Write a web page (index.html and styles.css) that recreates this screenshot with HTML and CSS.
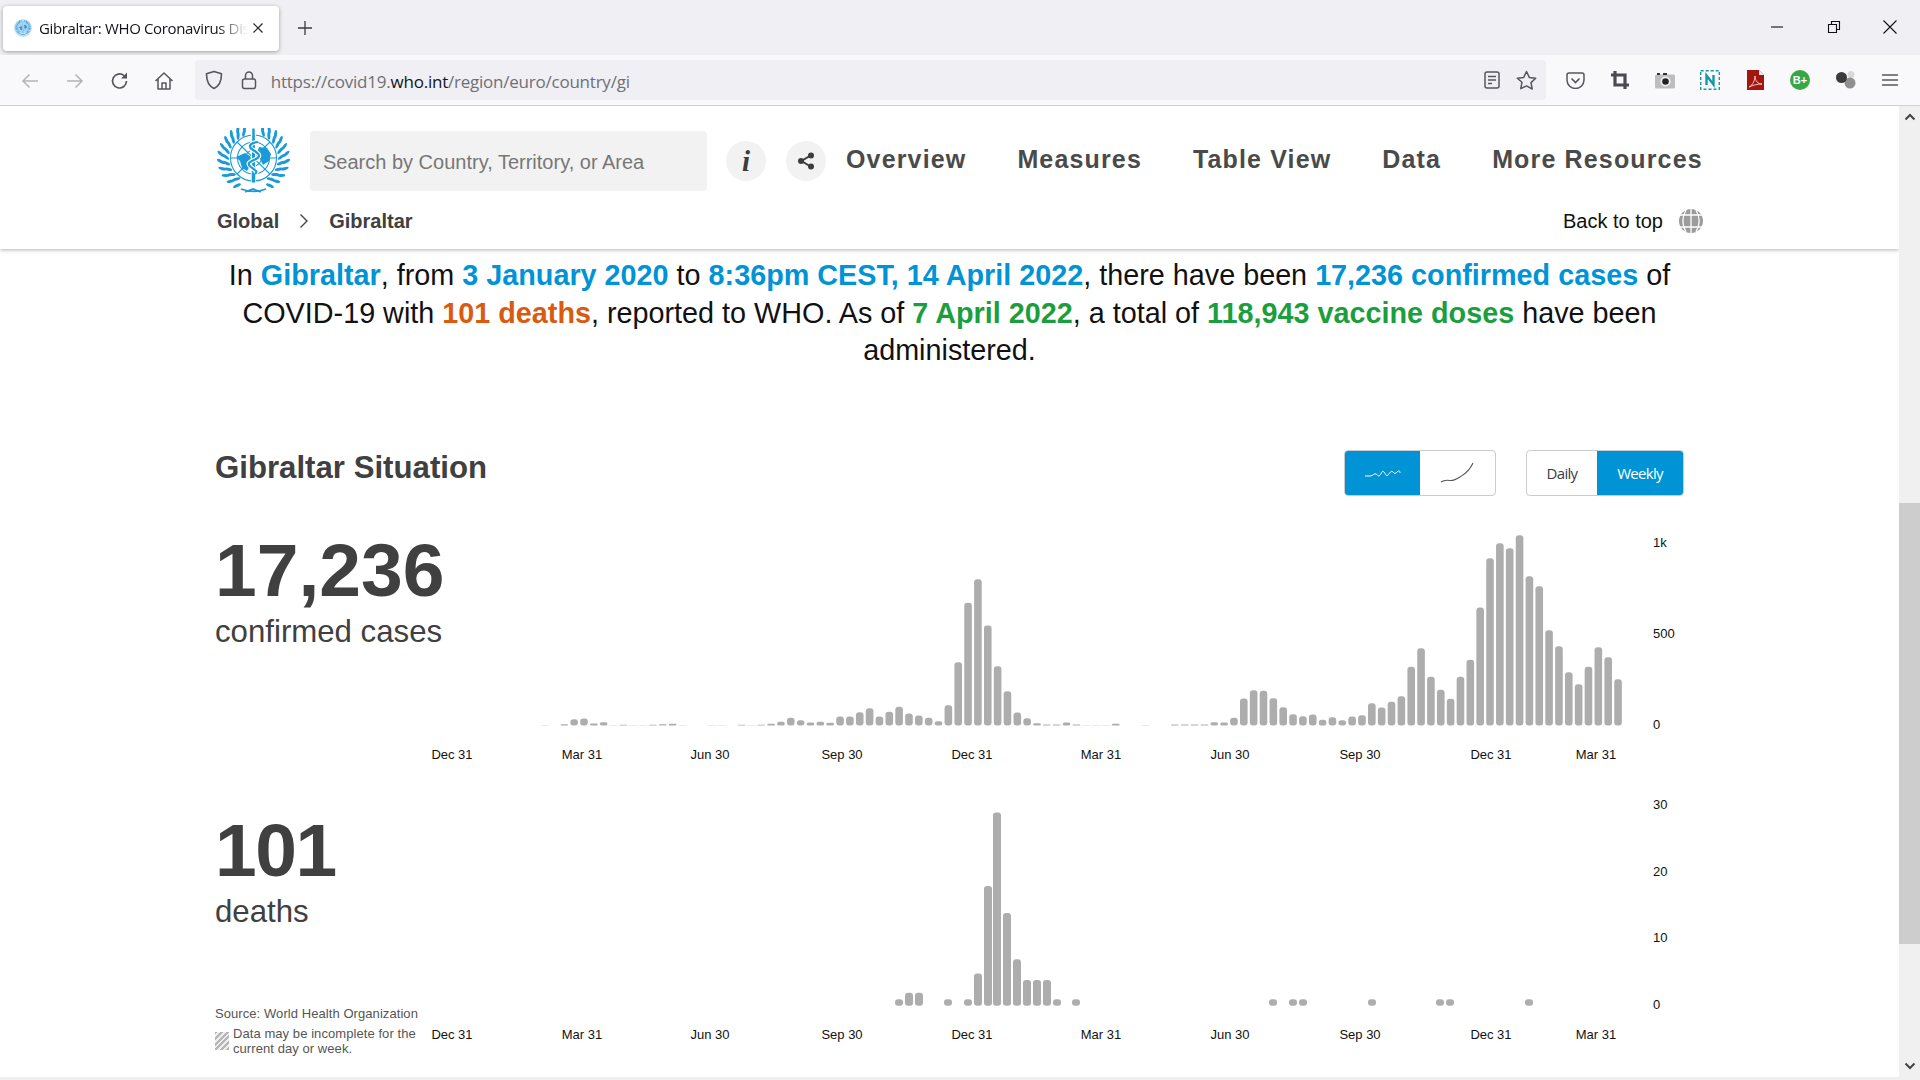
FILE: index.html
```html
<!DOCTYPE html>
<html lang="en">
<head>
    <meta charset="UTF-8">
    <title>Gibraltar: WHO Coronavirus Disease (COVID-19) Dashboard</title>
    <link rel="stylesheet" href="styles.css">
</head>
<body>
    <svg class="defs" width="0" height="0">
        <symbol id="who-logo" viewBox="217 128 73 65">
            <g fill="none" stroke="currentColor" stroke-width="1.1">
                <circle cx="253.5" cy="158" r="23"/>
                <circle cx="253.5" cy="158" r="16"/>
                <circle cx="253.5" cy="158" r="8"/>
                <path d="M230.5 158h46M253.5 135v46M237 142l33 32M270 142l-33 32"/>
            </g>
            <path fill="currentColor" d="M236 157l9-4 5 3 1 8-4 7-5-3-2-7zM259 147l8 1 4 6-2 7-6 4-3-6-3-6z"/>
            <path fill="none" stroke="#fff" stroke-width="5" d="M253.500 132v50"/>
            <path fill="currentColor" d="M252.300 128.500h2.400l.6 54h-3.600z"/>
            <path fill="none" stroke="#fff" stroke-width="4.500" d="M258 142c-9 1-10 5-5 8s9 6 3 9-10 4-5 8 7 4 4 7"/>
            <path fill="none" stroke="currentColor" stroke-width="2.200" d="M258 142c-9 1-10 5-5 8s9 6 3 9-10 4-5 8 7 4 4 7"/>
            <g id="wreath" fill="currentColor"></g>
            <path fill="none" stroke="currentColor" stroke-width="1.800" d="M241 189c8 3 17 3 25 0M245 192l8-3 8 3"/>
        </symbol>
    </svg>

    <div class="browser">
        <div class="tabbar">
            <div class="tab">
                <svg class="favicon" width="18" height="18"><circle cx="9" cy="9" r="9" fill="#bfe2f5"/><use href="#who-logo" x="1" y="1" width="16" height="16"/></svg>
                <span class="tab-title">Gibraltar: WHO Coronavirus Disease (COVID-19)</span>
                <svg class="icon" width="12" height="12" viewBox="0 0 12 12"><path d="M1.500 1.500l9 9M10.500 1.500l-9 9" stroke="#222" stroke-width="1.200"/></svg>
            </div>
            <svg class="new-tab" width="16" height="16" viewBox="0 0 16 16"><path d="M8 1v14M1 8h14" stroke="#3a3a3f" stroke-width="1.300"/></svg>
            <div class="window-btns">
                <svg width="14" height="14" viewBox="0 0 14 14"><path d="M1 7h12" stroke="#111" stroke-width="1.100"/></svg>
                <svg width="14" height="14" viewBox="0 0 14 14"><path d="M1.500 4.500h8v8h-8zM4.500 4.500v-3h8v8h-3" fill="none" stroke="#111" stroke-width="1.100"/></svg>
                <svg width="14" height="14" viewBox="0 0 14 14"><path d="M.5.500l13 13M13.500.500l-13 13" stroke="#111" stroke-width="1.100"/></svg>
            </div>
        </div>

        <div class="toolbar">
            <div class="tool nudge"><svg width="18" height="18" viewBox="0 0 18 18"><path d="M17 9H2M8.500 2.500L2 9l6.500 6.500" fill="none" stroke="#b4b4b8" stroke-width="1.500"/></svg></div>
            <div class="tool nudge"><svg width="18" height="18" viewBox="0 0 18 18"><path d="M1 9h15M9.500 2.500L16 9l-6.500 6.500" fill="none" stroke="#b4b4b8" stroke-width="1.500"/></svg></div>
            <div class="tool nudge"><svg width="20" height="20" viewBox="0 0 20 20"><path d="M16.500 10a7 7 0 1 1-2.500-5.400" fill="none" stroke="#55555e" stroke-width="1.700"/><path d="M17 1.500v6h-6z" fill="#55555e"/></svg></div>
            <div class="tool nudge"><svg width="20" height="20" viewBox="0 0 20 20"><path d="M1.500 10L10 2l8.500 8M4 8v10h12V8M8 18v-6h4v6" fill="none" stroke="#55555e" stroke-width="1.500" stroke-linejoin="round"/></svg></div>
            <div class="urlbar">
                <svg class="url-icon" width="20" height="20" viewBox="0 0 20 20"><path d="M10 1.500l7.500 2.300c0 7-1.500 12-7.500 14.700C4 15.800 2.500 10.800 2.500 3.800z" fill="none" stroke="#55555e" stroke-width="1.600" stroke-linejoin="round"/></svg>
                <svg class="url-icon" width="18" height="20" viewBox="0 0 18 20"><rect x="2.500" y="9" width="13" height="9.500" rx="2" fill="none" stroke="#55555e" stroke-width="1.500"/><path d="M5.500 9V5.500a3.500 3.500 0 0 1 7 0V9" fill="none" stroke="#55555e" stroke-width="1.500"/></svg>
                <div class="url"><span>https://covid19.</span><b>who.int</b><span>/region/euro/country/gi</span></div>
                <svg class="url-icon" width="16" height="18" viewBox="0 0 16 18"><rect x="1" y="1" width="14" height="16" rx="2" fill="none" stroke="#55555e" stroke-width="1.500"/><path d="M4 5.500h8M4 9h8M4 12.500h4" stroke="#55555e" stroke-width="1.500"/></svg>
                <svg class="url-icon star" width="21" height="20" viewBox="0 0 21 20"><path d="M10.500 1.500l2.800 5.900 6.400.8-4.700 4.400 1.200 6.400-5.700-3.100L4.800 18.600 6 12.200 1.300 8.200l6.400-.8z" fill="none" stroke="#55555e" stroke-width="1.500" stroke-linejoin="round"/></svg>
            </div>
            <div class="tool-group">
                <div class="tool"><svg width="19" height="17" viewBox="0 0 19 17"><path d="M3 1h13a2 2 0 0 1 2 2v5a8.500 8.500 0 0 1-17 0V3a2 2 0 0 1 2-2z" fill="none" stroke="#55555e" stroke-width="1.500"/><path d="M5.500 6.500l4 4 4-4" fill="none" stroke="#55555e" stroke-width="1.700"/></svg></div>
                <div class="tool"><svg width="20" height="20" viewBox="0 0 20 20"><path d="M5 1v14h14M1 5h14v14" fill="none" stroke="#4a4a55" stroke-width="3.200"/></svg></div>
                <div class="tool"><svg width="20" height="17" viewBox="0 0 20 17"><rect y="2.500" width="20" height="14" rx="1.500" fill="#bdbdbd"/><rect x="2" y="1" width="3" height="2" fill="#333"/><rect x="8" y="1" width="4" height="2" fill="#333"/><circle cx="10.500" cy="9.500" r="5" fill="#f2f2f2"/><circle cx="10.500" cy="9.500" r="3.300" fill="#222"/></svg></div>
                <div class="tool"><svg width="20" height="20" viewBox="0 0 20 20"><rect x=".7" y=".7" width="18.600" height="18.600" fill="none" stroke="#1797a8" stroke-width="1.400" stroke-dasharray="3 2"/><path d="M6.500 15V5.500l7 9V5" fill="none" stroke="#1797a8" stroke-width="2.400"/></svg></div>
                <div class="tool"><svg width="17" height="20" viewBox="0 0 17 20"><path d="M0 0h12l5 5v15H0z" fill="#a3160e"/><path d="M12 0l5 5h-5z" fill="#eee"/><path d="M2 17c4-2 6-7 6-11 0 5 3 8 7 8-4 0-9 1-13 3z" fill="none" stroke="#f0c8c0" stroke-width="1"/></svg></div>
                <div class="tool"><svg width="20" height="20" viewBox="0 0 20 20"><circle cx="10" cy="10" r="10" fill="#36a647"/><text class="bplus" x="10" y="14">B+</text></svg></div>
                <div class="tool"><svg width="21" height="20" viewBox="0 0 21 20"><circle cx="16" cy="4.500" r="3.500" fill="#d8d8d8"/><circle cx="15" cy="13" r="5.500" fill="#8f8f8f"/><circle cx="6.500" cy="7.500" r="5.500" fill="#3b3b3b"/></svg></div>
                <div class="tool"><svg width="16" height="14" viewBox="0 0 16 14"><path d="M0 2h16M0 7h16M0 12h16" stroke="#55555e" stroke-width="1.500"/></svg></div>
            </div>
        </div>

        <div class="viewport">
            <div class="page">
                <header class="site-header">
                    <div class="header-top">
                        <svg class="logo" width="73" height="65"><use href="#who-logo"/></svg>
                        <div class="search">Search by Country, Territory, or Area</div>
                        <div class="round-btn info">i</div>
                        <div class="round-btn">
                            <svg width="18" height="18" viewBox="0 0 18 18"><path d="M13.500 3.500l-9 5.500 9 5.500" fill="none" stroke="#3c3c3c" stroke-width="2"/><circle cx="14" cy="3.500" r="3" fill="#3c3c3c"/><circle cx="14" cy="14.500" r="3" fill="#3c3c3c"/><circle cx="4" cy="9" r="3" fill="#3c3c3c"/></svg>
                        </div>
                        <nav class="nav">
                            <a>Overview</a>
                            <a>Measures</a>
                            <a>Table View</a>
                            <a>Data</a>
                            <a>More Resources</a>
                        </nav>
                    </div>
                    <div class="header-bottom">
                        <div class="crumbs">
                            <span>Global</span>
                            <svg width="10" height="16" viewBox="0 0 10 16"><path d="M1.500 1.500L8 8l-6.500 6.500" fill="none" stroke="#444" stroke-width="1.400"/></svg>
                            <span>Gibraltar</span>
                        </div>
                        <div class="back-top">
                            <span>Back to top</span>
                            <svg width="26" height="26" viewBox="0 0 26 26"><circle cx="13" cy="13" r="12" fill="#9c9c9c"/><path d="M13 1v24M8 2c-4 7-4 15 0 22M18 2c4 7 4 15 0 22M2 7h22M2 19h22" fill="none" stroke="#fff" stroke-width="1.300"/></svg>
                        </div>
                    </div>
                </header>

                <main class="content">
                    <p class="summary">In <b class="blue">Gibraltar</b>, from <b class="blue">3 January 2020</b> to <b class="blue">8:36pm CEST, 14 April 2022</b>, there have been <b class="blue">17,236 confirmed cases</b> of COVID-19 with <b class="orange">101 deaths</b>, reported to WHO. As of <b class="green">7 April 2022</b>, a total of <b class="green">118,943 vaccine doses</b> have been administered.</p>

                    <div class="section-head">
                        <h2>Gibraltar Situation</h2>
                        <div class="toggles">
                            <div class="toggle">
                                <div class="toggle-item wide active"><svg width="36" height="12" viewBox="0 0 36 12"><path d="M0 9h5c3 0 4-3 6-2s2 3 4 1 2-5 4-3 2 5 4 3 3-5 5-3 2 2 4 0 3-1 3 1" fill="none" stroke="#fff" stroke-width="1"/></svg></div>
                                <div class="toggle-item wide"><svg width="36" height="22" viewBox="0 0 36 22"><path d="M1 20c3-2 6-2 9-1.500s6-1 10-3.500 9-5 13-14" fill="none" stroke="#555" stroke-width="1.100"/></svg></div>
                            </div>
                            <div class="toggle">
                                <div class="toggle-item daily">Daily</div>
                                <div class="toggle-item weekly active">Weekly</div>
                            </div>
                        </div>
                    </div>

                    <section class="stat-row cases">
                        <div class="stat">
                            <div class="stat-num">17,236</div>
                            <div class="stat-label">confirmed cases</div>
                        </div>
                        <svg id="casesChart" class="chart" viewBox="430 530 1253 245"></svg>
                    </section>

                    <section class="stat-row deaths">
                        <div class="stat">
                            <div class="stat-num">101</div>
                            <div class="stat-label">deaths</div>
                            <div class="source">Source: World Health Organization</div>
                            <div class="note">
                                <span class="hatch"></span>
                                <span>Data may be incomplete for the current day or week.</span>
                            </div>
                        </div>
                        <svg id="deathsChart" class="chart" viewBox="430 775 1253 300"></svg>
                    </section>
                </main>
            </div>

            <div class="scrollbar">
                <svg width="12" height="8" viewBox="0 0 12 8"><path d="M1.500 6.500L6 2l4.500 4.500" fill="none" stroke="#444" stroke-width="2"/></svg>
                <div class="scroll-track"><div class="scroll-thumb"></div></div>
                <svg width="12" height="8" viewBox="0 0 12 8"><path d="M1.500 1.500L6 6l4.500-4.500" fill="none" stroke="#444" stroke-width="2"/></svg>
            </div>
        </div>
        <div class="bottom-strip"></div>
    </div>

    <script src="script.js"></script>
</body>
</html>
```

FILE: styles.css
```css
* {
    margin: 0;
    padding: 0;
    box-sizing: border-box;
}

html, body {
    height: 100%;
    overflow: hidden;
}

body {
    background: #fff;
    font-family: "Liberation Sans", Arial, sans-serif;
    color: #404040;
}

.defs {
    display: block;
    height: 0;
}

.browser {
    display: flex;
    flex-direction: column;
    height: 1080px;
}

/* browser chrome */
.tabbar {
    display: flex;
    align-items: center;
    height: 55px;
    flex: none;
    background: #f0f0f4;
    padding-left: 3px;
}

.tab {
    display: flex;
    align-items: center;
    width: 276px;
    height: 45px;
    margin-top: 1px;
    padding: 0 15px 0 11px;
    background: #fff;
    border-radius: 4px;
    box-shadow: 0 1px 4px rgba(0, 0, 0, 0.35);
}

.favicon {
    flex: none;
    color: #2f8fd0;
}

.tab-title {
    flex: 1;
    margin: 0 4px 0 7px;
    overflow: hidden;
    white-space: nowrap;
    font-family: "Open Sans", sans-serif;
    font-size: 15px;
    letter-spacing: -0.35px;
    color: #15141a;
    -webkit-mask-image: linear-gradient(to right, #000 85%, transparent 100%);
    mask-image: linear-gradient(to right, #000 85%, transparent 100%);
}

.icon {
    flex: none;
}

.new-tab {
    margin-left: 18px;
    margin-top: 1px;
}

.window-btns {
    display: flex;
    gap: 42.500px;
    margin-left: auto;
    margin-right: 23px;
    margin-bottom: 1px;
}

.toolbar {
    display: flex;
    align-items: center;
    height: 51px;
    flex: none;
    padding-left: 8px;
    background: #f9f9fb;
    border-bottom: 1px solid #cfcfd8;
}

.tool {
    display: flex;
    align-items: center;
    justify-content: center;
    width: 44.700px;
    height: 40px;
    flex: none;
}

.tool.nudge {
    padding-top: 2px;
}

.urlbar {
    display: flex;
    align-items: center;
    width: 1351px;
    height: 40px;
    margin-left: 8px;
    padding: 0 9px 0 9px;
    background: #f0f0f4;
    border-radius: 4px;
    flex: none;
}

.url-icon {
    flex: none;
}

.url-icon + .url-icon {
    margin-left: 16px;
}

.url {
    flex: 1;
    margin-left: 13px;
    padding-top: 2px;
    font-family: "Open Sans", sans-serif;
    font-size: 17px;
    letter-spacing: -0.23px;
    color: #6f6f76;
    white-space: nowrap;
}

.url b {
    font-weight: 400;
    color: #15141a;
}

.tool-group {
    display: flex;
    margin-left: 7px;
}

.tool-group .tool {
    width: 45px;
}

.bplus {
    font-size: 11px;
    font-weight: bold;
    fill: #fff;
    text-anchor: middle;
}

/* page */
.viewport {
    display: flex;
    flex: 1;
    min-height: 0;
}

.page {
    flex: 1;
    overflow: hidden;
}

.scrollbar {
    display: flex;
    flex-direction: column;
    align-items: center;
    width: 21px;
    flex: none;
    padding: 7px 0;
    background: #f0f0f0;
}

.scroll-track {
    flex: 1;
    width: 100%;
    padding-top: 382px;
}

.scroll-thumb {
    height: 441px;
    background: #cdcdcd;
}

.bottom-strip {
    height: 3px;
    flex: none;
    background: #f0f0f0;
}

.site-header {
    height: 143px;
    padding: 22px 195px 0 217px;
    background: #fff;
    box-shadow: 0 1px 4px rgba(0, 0, 0, 0.3);
}

.header-top {
    display: flex;
    align-items: flex-start;
}

.logo {
    flex: none;
    color: #1b9ad9;
}

.search {
    width: 397px;
    height: 60px;
    margin: 3px 19px 0 20px;
    padding: 1px 0 0 13px;
    background: #f2f2f2;
    border-radius: 4px;
    font-size: 20px;
    line-height: 60px;
    color: #777;
}

.round-btn {
    display: flex;
    align-items: center;
    justify-content: center;
    width: 40px;
    height: 40px;
    margin: 13px 20px 0 0;
    background: #f2f2f2;
    border-radius: 50%;
}

.info {
    font-family: "Liberation Serif", serif;
    font-size: 29px;
    font-weight: bold;
    font-style: italic;
    color: #3c3c3c;
}

.nav {
    display: flex;
    gap: 51px;
    margin-top: 16px;
}

.nav a {
    font-size: 25px;
    font-weight: bold;
    letter-spacing: 1.150px;
    line-height: 30px;
    color: #4a4a4a;
    white-space: nowrap;
}

.header-bottom {
    display: flex;
    justify-content: space-between;
    align-items: center;
    margin-top: 10px;
    height: 36px;
}

.crumbs {
    display: flex;
    align-items: center;
    gap: 20px;
    font-size: 20px;
    font-weight: bold;
}

.back-top {
    display: flex;
    align-items: center;
    gap: 15px;
    font-size: 20px;
    color: #111;
}

.content {
    padding: 8px 215px 0 215px;
}

.summary {
    font-size: 28.780px;
    line-height: 37.500px;
    text-align: center;
    color: #111;
}

.blue { color: #0093d5; }
.orange { color: #d95b12; }
.green { color: #1b9e3e; }

.section-head {
    display: flex;
    justify-content: space-between;
    align-items: flex-start;
    margin-top: 80px;
    height: 80px;
}

.section-head h2 {
    font-size: 31.200px;
    line-height: 36px;
}

.toggles {
    display: flex;
    gap: 30px;
}

.toggle {
    display: flex;
    height: 46px;
    border: 1px solid #ccc;
    border-radius: 4px;
    overflow: hidden;
}

.toggle-item {
    display: flex;
    align-items: center;
    justify-content: center;
    font-family: "Open Sans", sans-serif;
    font-size: 15px;
    letter-spacing: -0.7px;
    color: #3c3c46;
}

.toggle-item.active {
    background: #0093d5;
    color: #fff;
}

.wide {
    width: 75px;
}

.daily {
    width: 70px;
}

.weekly {
    width: 86px;
}

.stat-row {
    display: flex;
}

.cases {
    height: 245px;
}

.deaths {
    height: 300px;
}

.stat {
    width: 215px;
    flex: none;
}

.deaths .stat {
    padding-top: 35px;
}

.stat-num {
    font-size: 75px;
    font-weight: bold;
    line-height: 80px;
    white-space: nowrap;
}

.deaths .stat-num {
    letter-spacing: -1.500px;
}

.stat-label {
    margin-top: 4px;
    font-size: 31.200px;
    line-height: 36px;
    white-space: nowrap;
}

.source {
    margin-top: 76px;
    font-size: 13px;
    line-height: 16px;
    letter-spacing: 0.07px;
    color: #555;
    white-space: nowrap;
}

.note {
    display: flex;
    align-items: center;
    gap: 4px;
    margin-top: 4px;
    font-size: 13px;
    line-height: 15px;
    letter-spacing: 0.07px;
    color: #555;
}

.hatch {
    width: 14px;
    height: 18px;
    flex: none;
    background: repeating-linear-gradient(135deg, #b5b5b5 0 2px, #eee 2px 4px);
}

.chart {
    width: 1253px;
    flex: none;
    overflow: hidden;
}

.cases .chart {
    height: 245px;
}

.deaths .chart {
    height: 300px;
}

.bar {
    fill: #adadad;
}

.tick {
    font-size: 13px;
    fill: #111;
}

.tick-x {
    text-anchor: middle;
}
```

FILE: script.js
```js
// bar heights are in page pixels, read off the charts
const casesData = [
    1, 0, 4, 19, 21, 6, 10, 1, 2, 1, 1, 2, 4, 5, 1, 0, 0, 1, 1, 0, 2, 1, 2, 5, 11, 23, 16, 9, 11, 8,
    27, 27, 40, 52, 27, 41, 56, 36, 30, 23, 13, 61, 190, 368, 439, 300, 178, 103, 39, 22, 7, 3, 3, 9,
    3, 1, 1, 1, 5, 0, 0, 1, 0, 0, 3, 3, 3, 3, 10, 9, 23, 81, 106, 104, 82, 55, 34, 28, 33, 17, 25, 16,
    27, 31, 67, 54, 71, 88, 176, 232, 146, 107, 80, 146, 197, 354, 502, 547, 532, 571, 448, 418, 286,
    238, 160, 124, 176, 235, 205, 139
];
const deathBars = [
    [899, 1], [909, 2], [919, 2], [948, 1], [968, 1], [978, 5], [988, 18.600], [997, 30], [1007, 14.400],
    [1017, 7.200], [1027, 4], [1037, 4], [1047, 4], [1057, 1], [1076, 1],
    [1273, 1], [1293, 1], [1303, 1], [1372, 1], [1440, 1], [1450, 1], [1529, 1]
];
const xTicks = [
    ['Dec 31', 452], ['Mar 31', 582], ['Jun 30', 710], ['Sep 30', 842], ['Dec 31', 972],
    ['Mar 31', 1101], ['Jun 30', 1230], ['Sep 30', 1360], ['Dec 31', 1491], ['Mar 31', 1596]
];

const NS = 'http://www.w3.org/2000/svg';

const addSvg = (parent, tag, attrs, text) => {
    const el = document.createElementNS(NS, tag);
    Object.keys(attrs).forEach((k) => el.setAttribute(k, attrs[k]));
    if (text) el.textContent = text;
    parent.appendChild(el);
};

const addBar = (svg, cx, h, base, w) => {
    addSvg(svg, 'rect', {
        class: 'bar', x: cx - w / 2, y: base - h, width: w, height: h,
        rx: Math.min(3, h / 2), ry: Math.min(3, h / 2)
    });
};

const addTicks = (svg, yTicks, tickY) => {
    xTicks.forEach(([label, x]) => {
        addSvg(svg, 'text', { class: 'tick tick-x', x: x, y: tickY }, label);
    });
    yTicks.forEach(([label, y]) => {
        addSvg(svg, 'text', { class: 'tick', x: 1653, y: y + 5 }, label);
    });
};

const casesSvg = document.getElementById('casesChart');
casesData.forEach((v, i) => {
    if (v === 0) return;
    addBar(casesSvg, 544.600 + i * 9.848, v / 3, 725.500, 7.600);
});
addTicks(casesSvg, [['1k', 542], ['500', 633], ['0', 724]], 759);

const deathsSvg = document.getElementById('deathsChart');
deathBars.forEach(([x, v]) => addBar(deathsSvg, x, v * 6.440, 1005.700, 8));
addTicks(deathsSvg, [['30', 804], ['20', 871], ['10', 937], ['0', 1004]], 1039);

// laurel leaves of the WHO emblem
const wreath = document.getElementById('wreath');
[-1, 1].forEach((side) => {
    [[27, 5], [32, 0]].forEach(([r, offset]) => {
        for (let a = 15 + offset; a <= 150; a += 13.500) {
            const rad = a * Math.PI / 180;
            const x = 253.500 + side * r * Math.sin(rad) * 1.030;
            const y = 158 - r * Math.cos(rad);
            addSvg(wreath, 'ellipse', {
                cx: x, cy: y, rx: 1.500, ry: 4.200,
                transform: `rotate(${side * (a - 35)} ${x} ${y})`
            });
        }
    });
});
```
